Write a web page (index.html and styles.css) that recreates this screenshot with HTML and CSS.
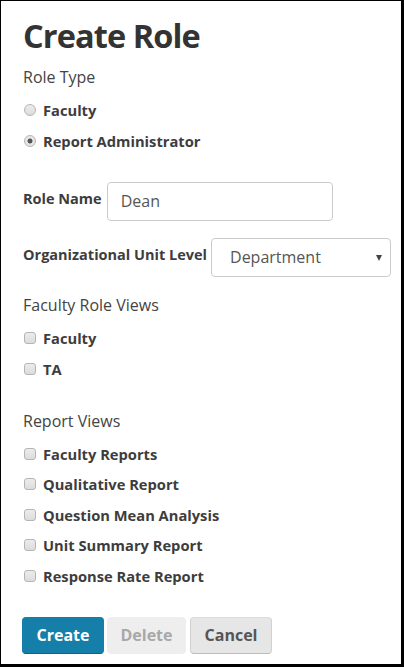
FILE: index.html
```html
<!DOCTYPE html>
<html>
<head>
<meta charset="utf-8">
<link rel="stylesheet" href="styles.css">
</head>
<body>
<div class="panel">
  <h1 class="title">Create Role</h1>

  <div class="group-title">Role Type</div>
  <label class="option first"><input type="radio" name="rt" class="ctl radio"><span>Faculty</span></label>
  <label class="option"><input type="radio" name="rt" class="ctl radio" checked><span>Report Administrator</span></label>

  <div class="field field-name">
    <label class="field-label">Role Name</label>
    <input class="text-input" type="text" value="Dean">
  </div>
  <div class="field field-unit">
    <label class="field-label">Organizational Unit Level</label>
    <span class="select-wrap">
      <select class="select"><option>Department</option></select>
    </span>
  </div>

  <div class="group-title gt-faculty">Faculty Role Views</div>
  <label class="option first"><input type="checkbox" class="ctl check"><span>Faculty</span></label>
  <label class="option"><input type="checkbox" class="ctl check"><span>TA</span></label>

  <div class="group-title gt-report">Report Views</div>
  <label class="option first"><input type="checkbox" class="ctl check"><span>Faculty Reports</span></label>
  <label class="option"><input type="checkbox" class="ctl check"><span>Qualitative Report</span></label>
  <label class="option"><input type="checkbox" class="ctl check"><span>Question Mean Analysis</span></label>
  <label class="option"><input type="checkbox" class="ctl check"><span>Unit Summary Report</span></label>
  <label class="option"><input type="checkbox" class="ctl check"><span>Response Rate Report</span></label>

  <div class="actions">
    <button class="btn btn-create">Create</button>
    <button class="btn btn-delete" disabled>Delete</button>
    <button class="btn btn-cancel">Cancel</button>
  </div>
</div>
</body>
</html>
```

FILE: styles.css
```css
html, body {
  margin: 0;
  padding: 0;
  background: #fff;
}
body {
  font-family: "Open Sans", "Noto Sans", sans-serif;
  color: #333;
}
.panel {
  box-sizing: border-box;
  width: 404px;
  height: 667px;
  border-style: solid;
  border-color: #000;
  border-width: 1px 3px 3px 1px;
  padding: 15px 22px 0 22px;
  background: #fff;
}
.title {
  margin: 0;
  font-size: 32.5px;
  line-height: 40px;
  font-weight: 700;
  color: #333;
  letter-spacing: -0.9px;
}
.group-title {
  margin-top: 10px;
  font-size: 16px;
  line-height: 22px;
  color: #444;
}
.gt-faculty { margin-top: 17px; }
.gt-report { margin-top: 31px; }
.option {
  display: flex;
  align-items: center;
  height: 20px;
  margin-top: 10.5px;
  font-size: 14.7px;
  line-height: 20px;
  font-weight: 700;
  color: #3d3d3d;
}
.option.first { margin-top: 12.2px; }
.ctl {
  -webkit-appearance: none;
  appearance: none;
  margin: 0 7px 0 1px;
  width: 12px;
  height: 12px;
  box-sizing: border-box;
  border: 1px solid #b5b5b5;
  background: linear-gradient(#ececec, #dcdcdc);
  flex: none;
}
.radio {
  border-radius: 50%;
}
.radio:checked {
  background: radial-gradient(circle, #555 0 2.2px, #e6e6e6 2.8px);
}
.check {
  border-radius: 3px;
}
.field {
  display: flex;
  align-items: center;
}
.field-name { margin-top: 31.3px; }
.field-unit { margin-top: 17px; }
.field-label {
  flex: none;
  white-space: nowrap;
  font-size: 14.5px;
  line-height: 20px;
  font-weight: 700;
  color: #3d3d3d;
  margin-bottom: 5px;
}
.text-input {
  box-sizing: border-box;
  flex: none;
  margin-left: 5px;
  width: 226px;
  height: 39px;
  border: 1px solid #ccc;
  border-radius: 4px;
  padding: 0 13px;
  font-family: "Open Sans", sans-serif;
  font-size: 16px;
  color: #555;
  background: #fff;
  outline: none;
}
.select-wrap {
  position: relative;
  display: block;
  flex: none;
  margin-left: 4px;
}
.select-wrap::after {
  content: "";
  position: absolute;
  right: 9px;
  top: 17px;
  border-left: 3.5px solid transparent;
  border-right: 3.5px solid transparent;
  border-top: 6px solid #444;
  pointer-events: none;
}
.select {
  -webkit-appearance: none;
  appearance: none;
  box-sizing: border-box;
  width: 180px;
  height: 39px;
  border: 1px solid #ccc;
  border-radius: 4px;
  padding: 0 18px;
  font-family: "Open Sans", sans-serif;
  font-size: 16px;
  color: #555;
  background: #fff;
  outline: none;
}
.actions {
  display: flex;
  margin-top: 30.8px;
  margin-left: -1px;
}
.btn {
  box-sizing: border-box;
  height: 37px;
  padding: 0;
  border-radius: 4px;
  font-family: "Open Sans", sans-serif;
  font-size: 16px;
  font-weight: 700;
  line-height: 20px;
  border: 1px solid transparent;
}
.btn-create {
  width: 82px;
  background: #157fa9;
  border-color: #157fa9 #157fa9 #0d6386 #157fa9;
  color: #fff;
}
.btn-delete {
  width: 79px;
  margin-left: 3px;
  background: #eeeeee;
  border-color: #eeeeee;
  color: #a8a8a8;
}
.btn-cancel {
  width: 82px;
  margin-left: 4px;
  background: #e6e6e6;
  border-color: #dcdcdc #d0d0d0 #bdbdbd #d0d0d0;
  color: #555;
}
```
